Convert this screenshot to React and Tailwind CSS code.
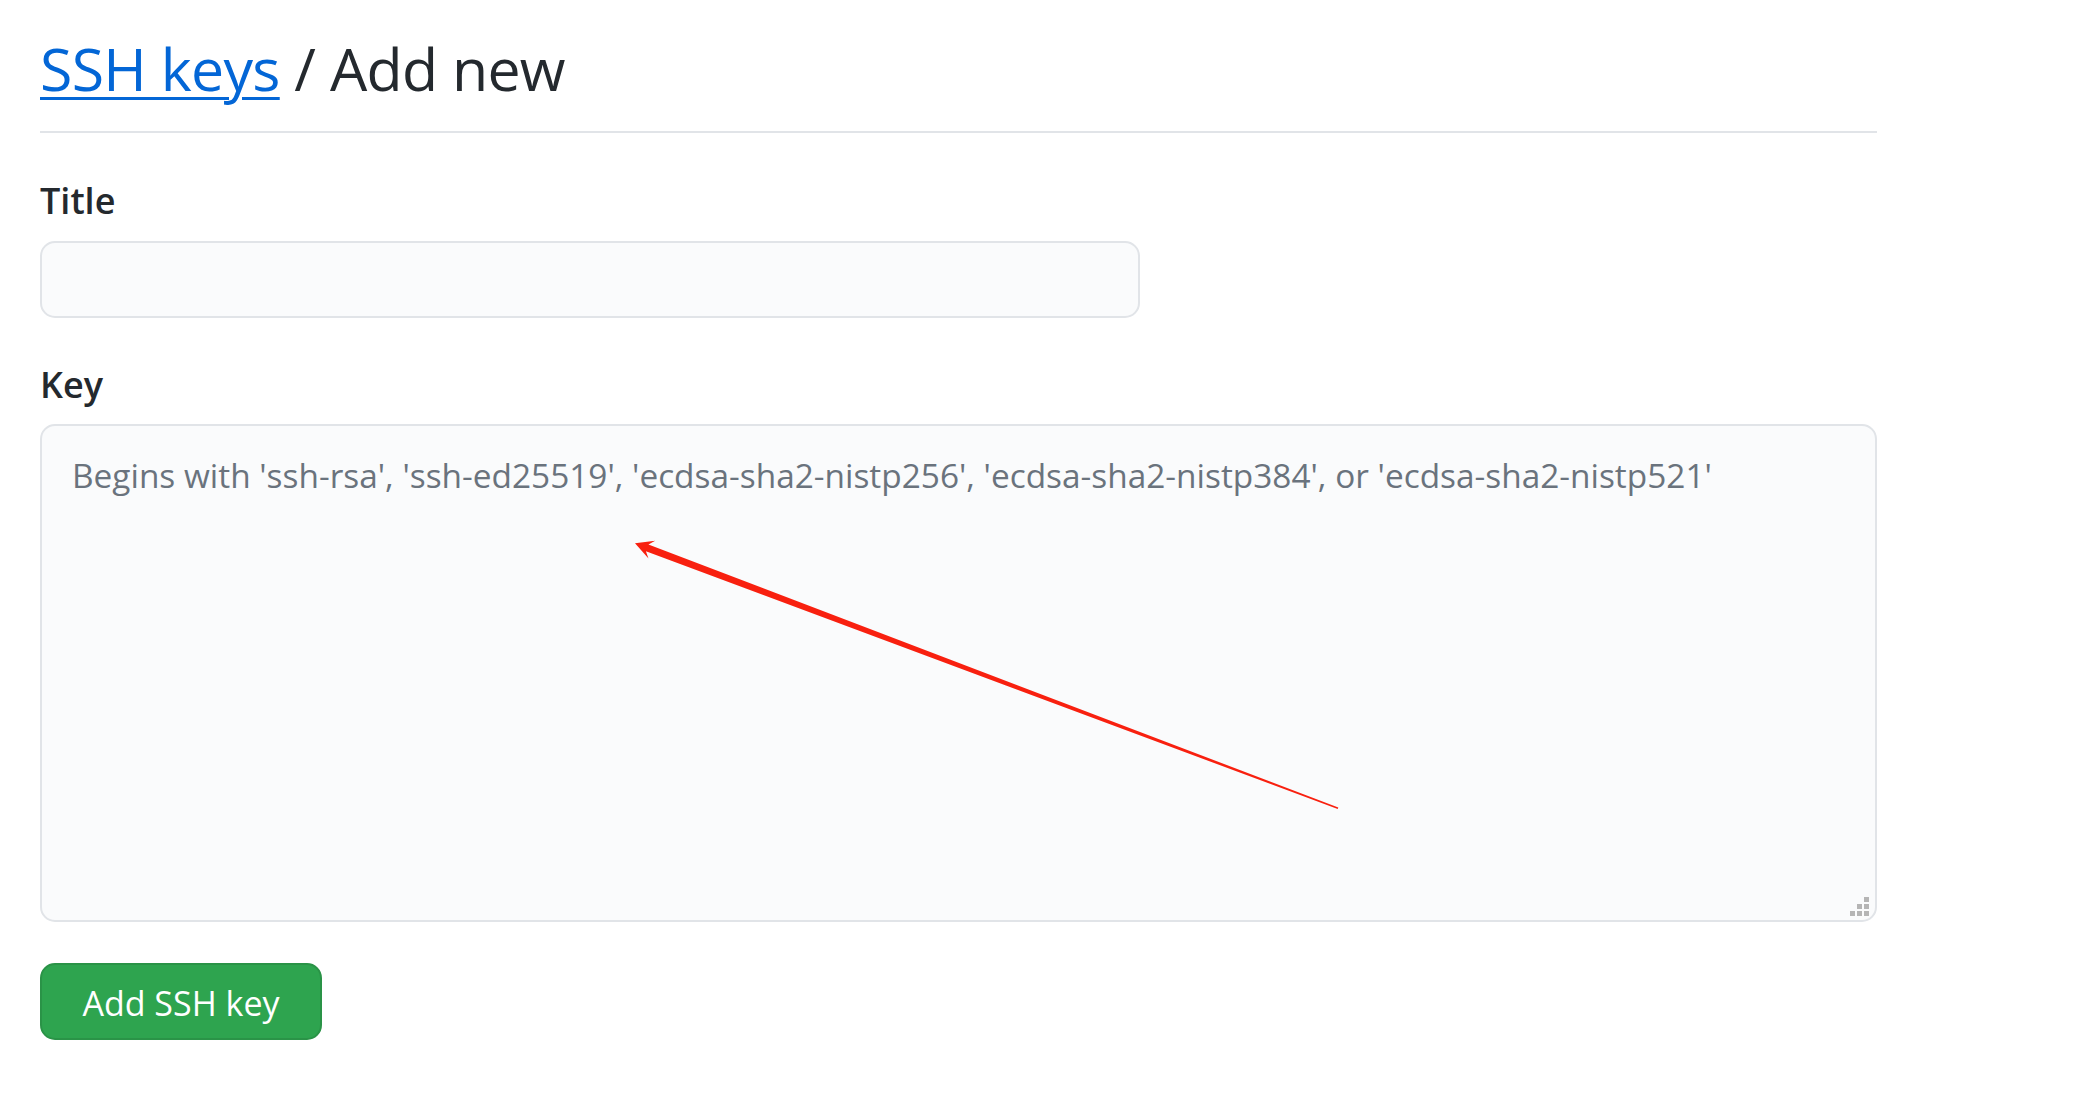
import React from "react";

function Grip() {
  const cells = [
    [false, false, true],
    [false, true, true],
    [true, true, true],
  ];
  return (
    <div className="pointer-events-none absolute bottom-[6px] right-[8px] grid grid-cols-3 gap-[2px]">
      {cells.flat().map((on, i) => (
        <span key={i} className={on ? "block h-[5px] w-[5px] bg-[#b5b5b5]" : "block h-[5px] w-[5px]"} />
      ))}
    </div>
  );
}

function Arrow() {
  // local coordinates relative to the textarea box
  const T = [595, 119.3];
  const E = [1298, 384.3];
  const dx = E[0] - T[0];
  const dy = E[1] - T[1];
  const len = Math.hypot(dx, dy);
  const b = [dx / len, dy / len];
  const n = [b[1], -b[0]];
  const at = (d, w) => [T[0] + b[0] * d + n[0] * w, T[1] + b[1] * d + n[1] * w];
  const pts = [
    T,
    at(18, 9.5),
    at(13, 3.6),
    [E[0] + n[0] * 0.8, E[1] + n[1] * 0.8],
    [E[0] - n[0] * 0.8, E[1] - n[1] * 0.8],
    at(13, -3.6),
    at(18, -9.5),
  ];
  return (
    <svg className="pointer-events-none absolute left-0 top-0 h-full w-full overflow-visible">
      <polygon points={pts.map((p) => p.join(",")).join(" ")} fill="#f8200f" />
    </svg>
  );
}

export default function App() {
  return (
    <div className="min-h-screen bg-white px-[40px] text-[#24292e]" style={{ fontFamily: '"Open Sans", "Noto Sans", sans-serif' }}>
      <div className="w-[1837px]">
        <div className="border-b-2 border-[#e1e4e8] pb-[25px] pt-[31px]">
          <h2 className="text-[59px] font-normal leading-[75px] tracking-[-0.7px]">
            <a href="#" className="text-[#0366d6] underline decoration-[3px] underline-offset-[6px]">SSH keys</a>
            <span> / Add new</span>
          </h2>
        </div>

        <div className="mt-[45px] text-[36px] font-semibold leading-[45px]">Title</div>
        <input
          type="text"
          className="mt-[18px] block h-[77px] w-[1100px] rounded-[15px] border-2 border-[#e1e4e8] bg-[#fafbfc] px-[30px] text-[34px] outline-none"
        />

        <div className="mt-[44px] text-[36px] font-semibold leading-[45px]">Key</div>
        <div className="relative mt-[17px] h-[498px] w-[1837px]">
          <textarea
            className="block h-full w-full resize-none rounded-[15px] border-2 border-[#e1e4e8] bg-[#fafbfc] px-[30px] pt-[23.5px] text-[33.4px] leading-[51px] outline-none placeholder:text-[#6a737d]"
            placeholder="Begins with 'ssh-rsa', 'ssh-ed25519', 'ecdsa-sha2-nistp256', 'ecdsa-sha2-nistp384', or 'ecdsa-sha2-nistp521'"
          />
          <Grip />
          <Arrow />
        </div>

        <button
          type="button"
          className="mt-[41px] flex h-[77px] w-[282px] items-center justify-center rounded-[15px] border-2 border-[#2a9347] bg-[#2ea44f] pt-[4px] text-[34px] font-normal text-white"
        >
          Add SSH key
        </button>
      </div>
    </div>
  );
}
